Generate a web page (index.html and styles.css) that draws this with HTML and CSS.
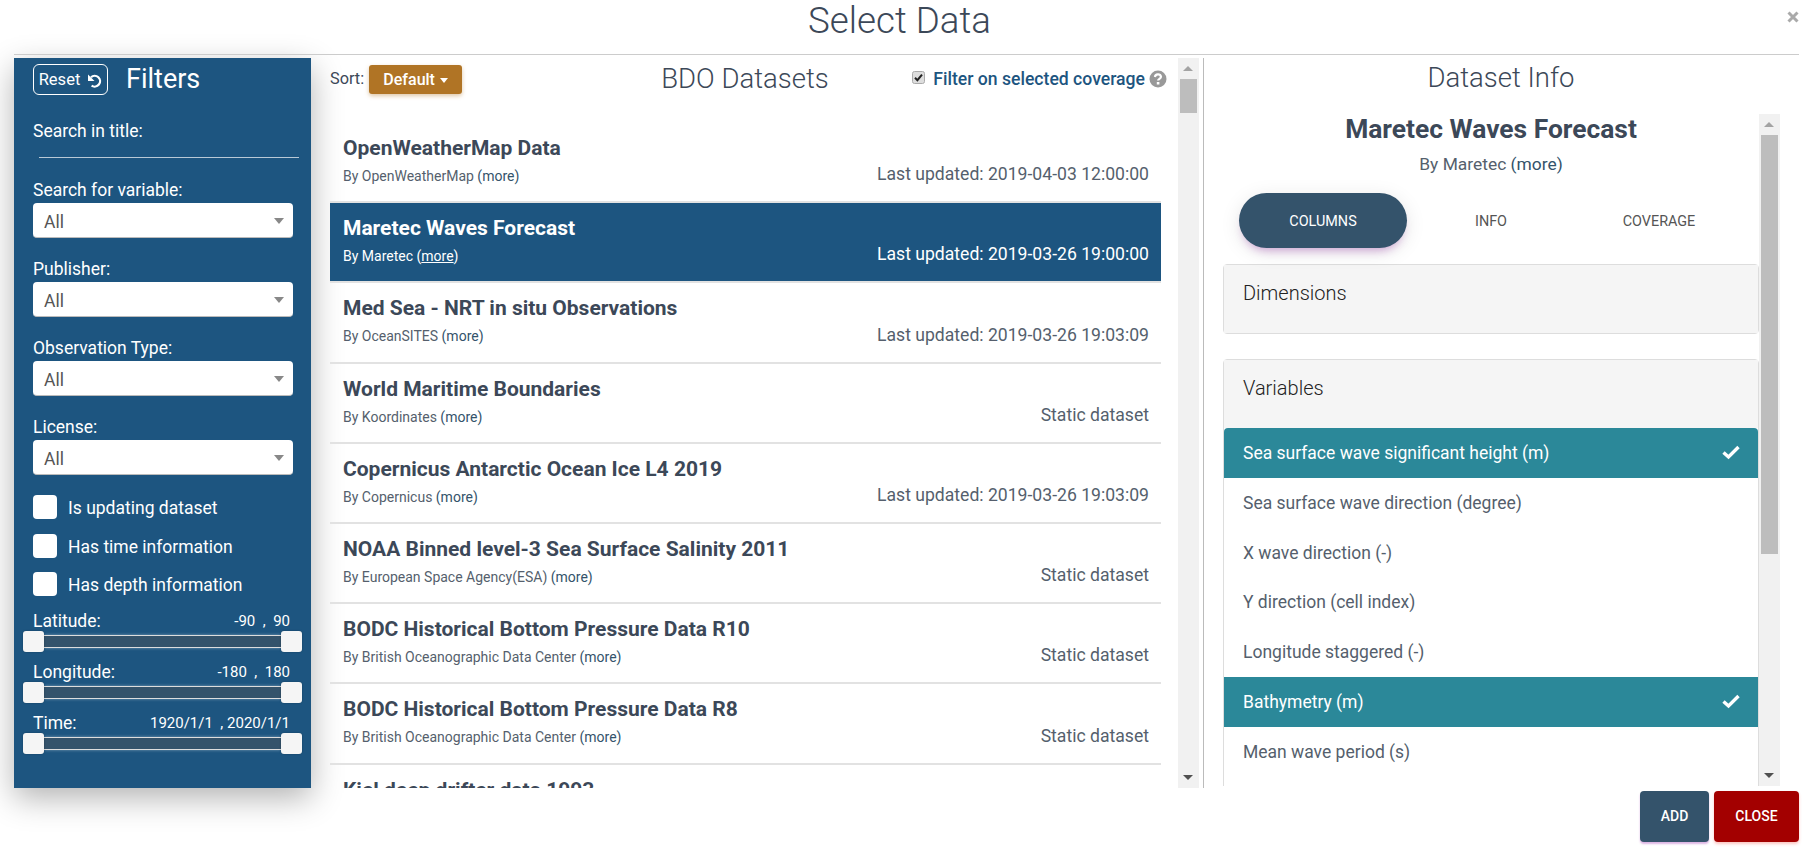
FILE: index.html
```html
<!DOCTYPE html>
<html>
    <head>
        <title>Select Data</title>
        <link rel="stylesheet" href="styles.css">
    </head>
    <body>
        <div class="modal-header">
            <h1>Select Data</h1>
            <svg class="close-x" viewBox="0 0 12 12"><path d="M1.5 1.5L10.5 10.5M10.5 1.5L1.5 10.5"/></svg>
        </div>

        <div class="modal-body">
            <div class="filters">
                <div class="filters-top">
                    <div class="reset-btn">Reset
                        <svg viewBox="0 0 15 15"><path d="M4 4.2A5.4 5.4 0 1 1 4.6 12.6"/><path class="fill" d="M1 1.5V8H7.5Z"/></svg>
                    </div>
                    <div class="filters-title">Filters</div>
                </div>
                <div class="f-label f-first">Search in title:</div>
                <div class="f-line"></div>
                <div class="f-label f-variable">Search for variable:</div>
                <div class="f-select">All<span class="caret"></span></div>
                <div class="f-label">Publisher:</div>
                <div class="f-select">All<span class="caret"></span></div>
                <div class="f-label">Observation Type:</div>
                <div class="f-select">All<span class="caret"></span></div>
                <div class="f-label">License:</div>
                <div class="f-select">All<span class="caret"></span></div>
                <div class="f-checks">
                    <div class="f-check"><span class="box"></span><span class="f-check-text">Is updating dataset</span></div>
                    <div class="f-check"><span class="box"></span><span class="f-check-text">Has time information</span></div>
                    <div class="f-check"><span class="box"></span><span class="f-check-text">Has depth information</span></div>
                </div>
                <div class="range">
                    <div class="range-head"><span>Latitude:</span><span class="range-val">-90 &nbsp;,&nbsp; 90</span></div>
                    <div class="slider"><span class="handle left"></span><span class="handle right"></span></div>
                </div>
                <div class="range">
                    <div class="range-head"><span>Longitude:</span><span class="range-val">-180 &nbsp;,&nbsp; 180</span></div>
                    <div class="slider"><span class="handle left"></span><span class="handle right"></span></div>
                </div>
                <div class="range">
                    <div class="range-head"><span>Time:</span><span class="range-val">1920/1/1 &nbsp;,&nbsp;2020/1/1</span></div>
                    <div class="slider"><span class="handle left"></span><span class="handle right"></span></div>
                </div>
            </div>

            <div class="datasets">
                <div class="datasets-top">
                    <div class="sort">Sort: <span class="sort-btn">Default<span class="caret-w"></span></span></div>
                    <h2>BDO Datasets</h2>
                    <div class="coverage">
                        <svg class="cov-box" viewBox="0 0 13 13"><rect x=".5" y=".5" width="12" height="12" rx="2"/><path d="M3 6.8L5.4 9.2L10 3.6"/></svg>
                        <span class="coverage-text">Filter on selected coverage</span>
                        <svg class="help" viewBox="0 0 18 18"><circle cx="9" cy="9" r="8.5"/><path class="q" d="M5.9 7A3.1 2.9 0 0 1 12 6.7C12 8.8 9.1 8.8 9.1 10.6"/><rect class="dot" x="7.8" y="12" width="2.6" height="2.5"/></svg>
                    </div>
                </div>
                <div class="list">
                    <div class="row">
                        <div class="row-left"><div class="row-title">OpenWeatherMap Data</div><div class="row-sub">By OpenWeatherMap <span class="more">(more)</span></div></div>
                        <div class="row-date">Last updated: 2019-04-03 12:00:00</div>
                    </div>
                    <div class="row selected">
                        <div class="row-left"><div class="row-title">Maretec Waves Forecast</div><div class="row-sub">By Maretec <span class="more">(<u>more</u>)</span></div></div>
                        <div class="row-date">Last updated: 2019-03-26 19:00:00</div>
                    </div>
                    <div class="row">
                        <div class="row-left"><div class="row-title">Med Sea - NRT in situ Observations</div><div class="row-sub">By OceanSITES <span class="more">(more)</span></div></div>
                        <div class="row-date">Last updated: 2019-03-26 19:03:09</div>
                    </div>
                    <div class="row">
                        <div class="row-left"><div class="row-title">World Maritime Boundaries</div><div class="row-sub">By Koordinates <span class="more">(more)</span></div></div>
                        <div class="row-date">Static dataset</div>
                    </div>
                    <div class="row">
                        <div class="row-left"><div class="row-title">Copernicus Antarctic Ocean Ice L4 2019</div><div class="row-sub">By Copernicus <span class="more">(more)</span></div></div>
                        <div class="row-date">Last updated: 2019-03-26 19:03:09</div>
                    </div>
                    <div class="row">
                        <div class="row-left"><div class="row-title">NOAA Binned level-3 Sea Surface Salinity 2011</div><div class="row-sub">By European Space Agency(ESA) <span class="more">(more)</span></div></div>
                        <div class="row-date">Static dataset</div>
                    </div>
                    <div class="row">
                        <div class="row-left"><div class="row-title">BODC Historical Bottom Pressure Data R10</div><div class="row-sub">By British Oceanographic Data Center <span class="more">(more)</span></div></div>
                        <div class="row-date">Static dataset</div>
                    </div>
                    <div class="row">
                        <div class="row-left"><div class="row-title">BODC Historical Bottom Pressure Data R8</div><div class="row-sub">By British Oceanographic Data Center <span class="more">(more)</span></div></div>
                        <div class="row-date">Static dataset</div>
                    </div>
                    <div class="row">
                        <div class="row-left"><div class="row-title">Kiel deep drifter data 1993</div></div>
                    </div>
                </div>
            </div>

            <div class="scrollbar list-bar">
                <span class="arrow up"></span>
                <span class="thumb"></span>
                <span class="arrow down"></span>
            </div>

            <div class="info">
                <h2>Dataset Info</h2>
                <div class="info-scroll">
                    <div class="info-content">
                        <div class="info-title">Maretec Waves Forecast</div>
                        <div class="info-by">By Maretec <span class="more">(more)</span></div>
                        <div class="tabs">
                            <div class="tab active">COLUMNS</div>
                            <div class="tab">INFO</div>
                            <div class="tab">COVERAGE</div>
                        </div>
                        <div class="panel dims"><div class="panel-head">Dimensions</div></div>
                        <div class="panel">
                            <div class="panel-head">Variables</div>
                            <div class="var on first">Sea surface wave significant height (m)<svg class="tick" viewBox="0 0 20 16"><path d="M2.5 8.5L7.5 13L17.5 3"/></svg></div>
                            <div class="var">Sea surface wave direction (degree)</div>
                            <div class="var">X wave direction (-)</div>
                            <div class="var">Y direction (cell index)</div>
                            <div class="var">Longitude staggered (-)</div>
                            <div class="var on">Bathymetry (m)<svg class="tick" viewBox="0 0 20 16"><path d="M2.5 8.5L7.5 13L17.5 3"/></svg></div>
                            <div class="var">Mean wave period (s)</div>
                            <div class="var"></div>
                        </div>
                    </div>
                    <div class="scrollbar info-bar">
                        <span class="arrow up"></span>
                        <span class="thumb"></span>
                        <span class="arrow down"></span>
                    </div>
                </div>
            </div>
        </div>

        <div class="modal-footer">
            <div class="btn add">ADD</div>
            <div class="btn close">CLOSE</div>
        </div>
    </body>
</html>
```

FILE: styles.css
```css
* {
    box-sizing: border-box;
}
html, body {
    margin: 0;
    height: 851px;
    overflow: hidden;
    background: #fff;
    font-family: Roboto, sans-serif;
    color: #3c4858;
}
h1, h2 {
    margin: 0;
    font-weight: 300;
}

.modal-header {
    position: relative;
    height: 55px;
    margin: 0 12px 0 14px;
    border-bottom: 1px solid #ccc;
    text-align: center;
}
.modal-header h1 {
    font-size: 36.7px;
    line-height: 42px;
    padding-right: 14px;
}
.close-x {
    position: absolute;
    right: 0;
    top: 11px;
    width: 12px;
    height: 12px;
    fill: none;
    stroke: #aaa;
    stroke-width: 3;
}

.modal-body {
    display: flex;
    height: 730px;
    margin-top: 3px;
    padding-left: 14px;
}

/* left blue column */
.filters {
    width: 297px;
    height: 730px;
    flex: none;
    padding: 6px 18px 0 19px;
    background: #1d5580;
    color: #fff;
    font-size: 17.5px;
    box-shadow: 0 10px 30px rgba(0,0,0,.3);
}
.filters-top {
    display: flex;
    align-items: center;
    height: 31px;
}
.reset-btn {
    display: flex;
    align-items: center;
    justify-content: center;
    gap: 7px;
    width: 75px;
    height: 31px;
    border: 1px solid #fff;
    border-radius: 6px;
    font-size: 16.5px;
}
.reset-btn svg {
    width: 15px;
    height: 15px;
    margin-top: 2px;
    fill: none;
    stroke: #fff;
    stroke-width: 2.2;
}
.reset-btn .fill {
    fill: #fff;
    stroke: none;
}
.filters-title {
    margin-left: 18px;
    margin-top: -2px;
    font-size: 27px;
}
.f-label {
    height: 20px;
    line-height: 22px;
    margin-top: 20px;
    margin-bottom: 4px;
}
.f-label.f-first {
    margin-top: 25px;
}
.f-label.f-variable {
    margin-top: 21px;
}
.f-line {
    height: 1px;
    margin: 17px -6px 0 6px;
    background: #b9c9d6;
}
.f-select {
    position: relative;
    width: 260px;
    height: 35px;
    padding-left: 11px;
    line-height: 39px;
    background: #fff;
    border-radius: 4px;
    border-bottom: 1px solid #bbb;
    color: #555;
}
.caret {
    position: absolute;
    right: 9px;
    top: 15px;
    border-top: 6px solid #888;
    border-left: 5px solid transparent;
    border-right: 5px solid transparent;
}
.f-checks {
    height: 114px;
    margin-top: 20px;
}
.f-check {
    display: flex;
    align-items: center;
    gap: 11px;
    height: 24px;
    margin-bottom: 14.5px;
}
.f-check .box {
    width: 24px;
    height: 24px;
    background: #fff;
    border-radius: 4px;
}
.f-check-text {
    padding-top: 2px;
}
.range {
    height: 51px;
}
.range-head {
    display: flex;
    justify-content: space-between;
    align-items: center;
    height: 22px;
    padding-top: 2px;
    padding-right: 3px;
}
.range-val {
    font-size: 15px;
}
.slider {
    position: relative;
    height: 13px;
    margin: 4px 12px 0 11px;
    background: #34536b;
    border-top: 1px solid #ddd;
    border-bottom: 1px solid #ddd;
    box-shadow: 0 0 3px rgba(255,255,255,.4);
}
.handle {
    position: absolute;
    top: -5px;
    width: 21px;
    height: 21px;
    background: #f5f5f5;
    border-radius: 3px;
    box-shadow: 0 0 2px rgba(0,0,0,.3);
}
.handle.left {
    left: -21px;
}
.handle.right {
    right: -21px;
}

/* middle list */
.datasets {
    width: 838px;
    height: 730px;
    flex: none;
    margin-left: 19px;
    overflow: hidden;
}
.datasets-top {
    display: grid;
    grid-template-columns: 1fr auto 1fr;
    align-items: center;
    height: 65px;
    padding-bottom: 24px;
    padding-right: 8px;
}
.datasets-top h2, .info h2 {
    font-size: 27.5px;
    line-height: 39px;
}
.sort {
    font-size: 16.3px;
    display: flex;
    align-items: center;
    gap: 5px;
}
.sort-btn {
    display: inline-block;
    width: 93px;
    height: 29px;
    line-height: 29px;
    text-align: center;
    margin-top: 1px;
    font-size: 16px;
    background: #b07425;
    color: #fff;
    font-weight: 500;
    border-radius: 3px;
    box-shadow: 0 2px 4px rgba(176,116,37,.4);
}
.caret-w {
    display: inline-block;
    margin-left: 5px;
    vertical-align: 2px;
    border-top: 5px solid #fff;
    border-left: 4px solid transparent;
    border-right: 4px solid transparent;
}
.coverage {
    display: flex;
    align-items: center;
    justify-content: flex-end;
    margin-right: -7px;
}
.cov-box {
    width: 13px;
    height: 13px;
    margin: 0 8px 3px 0;
    flex: none;
}
.cov-box rect {
    fill: #ddd;
    stroke: #aaa;
}
.cov-box path {
    fill: none;
    stroke: #222;
    stroke-width: 2;
}
.coverage-text {
    font-size: 17.6px;
    font-weight: 500;
    color: #1d5580;
    white-space: nowrap;
}
.help {
    width: 18px;
    height: 18px;
    margin-left: 4px;
    flex: none;
}
.help circle {
    fill: #999;
}
.help .q {
    fill: none;
    stroke: #fff;
    stroke-width: 2.2;
}
.help .dot {
    fill: #fff;
}
.row {
    display: flex;
    justify-content: space-between;
    width: 831px;
    height: 80.2px;
    padding: 12px 12px 0 13px;
    border-bottom: 2px solid #e2e2e2;
}
.row-title {
    font-size: 21px;
    font-weight: 700;
    line-height: 26px;
    color: #3c4858;
    white-space: nowrap;
}
.row-sub {
    margin-top: 6px;
    font-size: 14px;
    line-height: 18px;
    color: #555f6d;
}
.row-date {
    align-self: flex-end;
    margin-bottom: 16px;
    font-size: 17.6px;
    line-height: 22px;
    color: #555f6d;
}
.more {
    color: #34536b;
}
.row.selected {
    background: #1d5580;
}
.row.selected .row-title, .row.selected .row-sub, .row.selected .more, .row.selected .row-date {
    color: #fff;
}

/* grey scrollbars */
.scrollbar {
    position: relative;
    flex: none;
    width: 21px;
    background: #f1f1f1;
}
.thumb {
    position: absolute;
    left: 2px;
    right: 2px;
    background: #bdbdbd;
}
.arrow {
    position: absolute;
    left: 5px;
    border-left: 5px solid transparent;
    border-right: 5px solid transparent;
}
.arrow.up {
    top: 8px;
    border-bottom: 5px solid #a3a3a3;
}
.arrow.down {
    bottom: 8px;
    border-top: 5px solid #505050;
}
.list-bar {
    height: 730px;
    margin-left: 10px;
}
.list-bar .thumb {
    top: 21px;
    height: 34px;
}
.info-bar .thumb {
    top: 21px;
    height: 419px;
}

/* right column */
.info {
    width: 595px;
    flex: none;
    margin-left: 4px;
    border-left: 1px solid #bbb;
}
.info h2 {
    text-align: center;
    height: 56px;
}
.info-scroll {
    display: flex;
    height: 672px;
    margin-left: 19px;
}
.info-content {
    width: 536px;
    flex: none;
    overflow: hidden;
}
.info-title {
    font-size: 26.4px;
    font-weight: 700;
    line-height: 31px;
    text-align: center;
    white-space: nowrap;
    margin-top: 0;
}
.info-by {
    margin-top: 9px;
    font-size: 17.4px;
    line-height: 20px;
    text-align: center;
    color: #555f6d;
}
.tabs {
    display: flex;
    margin: 19px 16px 0;
}
.tab {
    width: 168px;
    height: 55px;
    line-height: 57px;
    text-align: center;
    font-size: 14.4px;
    color: #555;
}
.tab.active {
    background: #34536b;
    color: #fff;
    border-radius: 28px;
    box-shadow: 0 4px 20px rgba(0,0,0,.1), 0 7px 10px -5px rgba(156,39,176,.4);
}
.panel {
    margin-top: 25px;
    border: 1px solid #ddd;
    border-radius: 4px 4px 0 0;
    background: #fff;
}
.panel.dims {
    height: 70px;
    margin-top: 16px;
    background: #f5f5f5;
    border-radius: 4px;
}
.panel-head {
    height: 68px;
    padding: 16px 18px 0 19px;
    font-size: 20px;
    font-weight: 300;
    line-height: 24px;
    color: #222;
    background: #f5f5f5;
}
.var {
    position: relative;
    height: 49.8px;
    padding-left: 19px;
    line-height: 51px;
    font-size: 17.5px;
    color: #555f6d;
}
.var.on {
    background: #2b8899;
    color: #fff;
}
.var.first {
    border-radius: 4px 4px 0 0;
}
.tick {
    position: absolute;
    right: 17px;
    top: 16px;
    width: 20px;
    height: 16px;
    fill: none;
    stroke: #fff;
    stroke-width: 3.4;
}

.modal-footer {
    display: flex;
    justify-content: flex-end;
    gap: 5px;
    margin-top: 3px;
    padding-right: 12px;
}
.btn {
    height: 51px;
    line-height: 51px;
    text-align: center;
    font-size: 14px;
    font-weight: 500;
    color: #fff;
    border-radius: 4px;
}
.btn.add {
    width: 69px;
    background: #34536b;
    box-shadow: 0 2px 2px rgba(156,39,176,.35);
}
.btn.close {
    width: 85px;
    background: #a30000;
    box-shadow: 0 2px 3px rgba(244,67,54,.3);
}
```
